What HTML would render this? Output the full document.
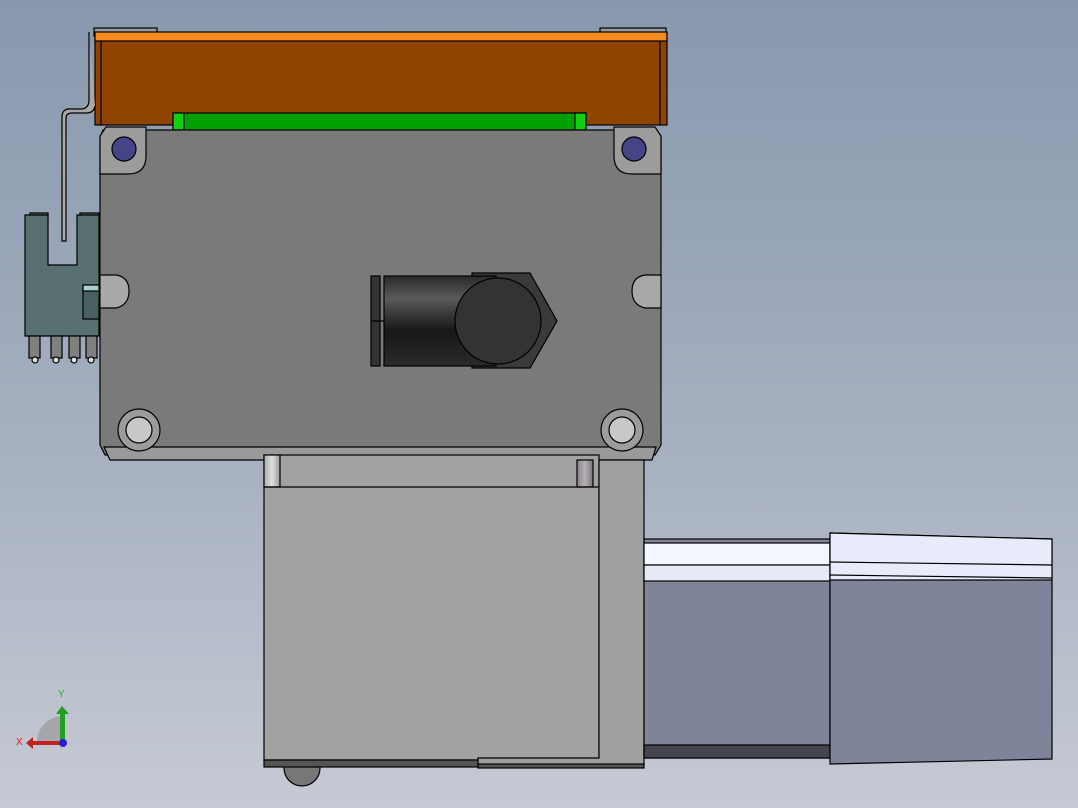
<!DOCTYPE html>
<html><head><style>
html,body{margin:0;padding:0;width:1078px;height:808px;overflow:hidden}
body{background:linear-gradient(180deg,#8898ae 0%,#a6b0c0 55%,#c6cad4 100%)}
svg{position:absolute;left:0;top:0}
text{font-family:"Liberation Sans",sans-serif}
</style></head><body>
<svg width="1078" height="808" viewBox="0 0 1078 808" xmlns="http://www.w3.org/2000/svg">
<defs>
<linearGradient id="cyl" x1="0" y1="0" x2="0" y2="1">
<stop offset="0" stop-color="#2a2a2a"/><stop offset="0.25" stop-color="#5a5a5a"/><stop offset="0.6" stop-color="#181818"/><stop offset="1" stop-color="#2a2a2a"/></linearGradient>
<linearGradient id="rod" x1="0" y1="0" x2="1" y2="0"><stop offset="0" stop-color="#aaa"/><stop offset="0.5" stop-color="#e0e0e0"/><stop offset="1" stop-color="#999"/></linearGradient>
<linearGradient id="rod2" x1="0" y1="0" x2="1" y2="0"><stop offset="0" stop-color="#888"/><stop offset="0.5" stop-color="#b8b0b8"/><stop offset="1" stop-color="#777"/></linearGradient>
</defs>
<g stroke="#000" stroke-width="1.2">
<rect x="94" y="28" width="63" height="8" fill="#9a9a9a"/>
<rect x="600" y="28" width="66" height="8" fill="#9a9a9a"/>
<rect x="95" y="37" width="572" height="88" fill="#8f4500"/>
<rect x="95" y="32" width="572" height="9" fill="#f58a1e"/>
<line x1="101" y1="41" x2="101" y2="125"/>
<line x1="660" y1="41" x2="660" y2="125"/>
<path d="M89 32 V100 Q89 108 82 109 H68 Q62 110 62 117 V241 H66 V118 Q66 113 72 113 H88 Q94 112 95 106" fill="#a8a8a8"/>
<rect x="173" y="113" width="413" height="17" fill="#00a000"/>
<rect x="173" y="113" width="11" height="17" fill="#10d010"/>
<rect x="575" y="113" width="11" height="17" fill="#10d010"/>
<path d="M103 130 H656 L661 138 V445 L655 455 H105 L100 445 V138 Z" fill="#7a7a7a"/>
<path d="M104 447 H656 L652 460 H110 Z" fill="#9a9a9a"/>
<path d="M100 136 L106 127 H146 V156 Q146 174 128 174 H100 Z" fill="#9c9c9c"/>
<path d="M661 136 L655 127 H614 V156 Q614 174 632 174 H661 Z" fill="#9c9c9c"/>
<circle cx="124" cy="149" r="12" fill="#454585"/>
<circle cx="634" cy="149" r="12" fill="#454585"/>
<circle cx="139" cy="430" r="21" fill="#9c9c9c"/>
<circle cx="139" cy="430" r="13" fill="#c8c8c8"/>
<circle cx="622" cy="430" r="21" fill="#9c9c9c"/>
<circle cx="622" cy="430" r="13" fill="#c8c8c8"/>
<path d="M100 275 H116 Q129 277 129 291 Q129 305 116 308 H100 Z" fill="#a8a8a8"/>
<path d="M661 275 H645 Q632 277 632 291 Q632 305 645 308 H661 Z" fill="#a8a8a8"/>
<rect x="30" y="213" width="18" height="4" fill="#587070"/>
<rect x="80" y="213" width="19" height="4" fill="#587070"/>
<path d="M25 215 H48 V265 H77 V215 H99 V336 H25 Z" fill="#587070"/>
<rect x="83" y="285" width="16" height="34" fill="#486060"/>
<rect x="83" y="285" width="16" height="6" fill="#a8d0d0"/>
<g fill="#808080"><rect x="29" y="336" width="11" height="22"/><rect x="51" y="336" width="11" height="22"/><rect x="69" y="336" width="11" height="22"/><rect x="86" y="336" width="11" height="22"/></g>
<g fill="#ddd"><circle cx="35" cy="360" r="3"/><circle cx="56" cy="360" r="3"/><circle cx="74" cy="360" r="3"/><circle cx="91" cy="360" r="3"/></g>
<rect x="371" y="276" width="9" height="90" fill="#333"/>
<line x1="371" y1="321" x2="384" y2="321"/>
<polygon points="472,273 530,273 557,321 530,368 472,368" fill="#3a3a3a"/>
<rect x="384" y="276" width="112" height="90" fill="url(#cyl)"/>
<circle cx="498" cy="321" r="43" fill="#333"/>
<circle cx="302" cy="768" r="18" fill="#777"/>
<rect x="264" y="455" width="335" height="305" fill="#a2a2a2"/>
<rect x="264" y="455" width="16" height="32" fill="url(#rod)"/>
<rect x="577" y="460" width="16" height="27" fill="url(#rod2)"/>
<line x1="264" y1="487" x2="599" y2="487"/>
<path d="M599 460 H644 V765 H478 V758 H599 Z" fill="#a0a0a0"/>
<rect x="264" y="760" width="214" height="7" fill="#555"/>
<rect x="478" y="764" width="166" height="4" fill="#555"/>
<rect x="644" y="539" width="186" height="219" fill="#808498"/>
<rect x="644" y="543" width="186" height="22" fill="#f4f7ff"/>
<rect x="644" y="565" width="186" height="16" fill="#e6eaf6"/>
<rect x="644" y="745" width="186" height="13" fill="#454550"/>
<path d="M830 533 L1052 539 V759 L830 764 Z" fill="#80849a"/>
<path d="M830 533 L1052 539 V580 H830 Z" fill="#e8ecfa"/>
<path d="M830 562 L1052 565" fill="none"/>
<path d="M830 575 L1052 578" fill="none"/>
</g>
<rect x="0" y="768" width="1078" height="40" fill="none"/>
<path d="M37 742 A26 26 0 0 1 62 716 V742 Z" fill="#9a9a9a" opacity="0.7"/>
<rect x="60" y="712" width="5" height="30" fill="#20a020"/>
<polygon points="56,714 62,706 69,714" fill="#20a020"/>
<rect x="32" y="741" width="30" height="4" fill="#c02020"/>
<polygon points="33,737 26,743 33,749" fill="#c02020"/>
<circle cx="63" cy="743" r="4" fill="#2020e0"/>
<text x="58" y="697" font-size="10" fill="#20c020">Y</text>
<text x="16" y="745" font-size="10" fill="#e02020">X</text>
</svg>
</body></html>
